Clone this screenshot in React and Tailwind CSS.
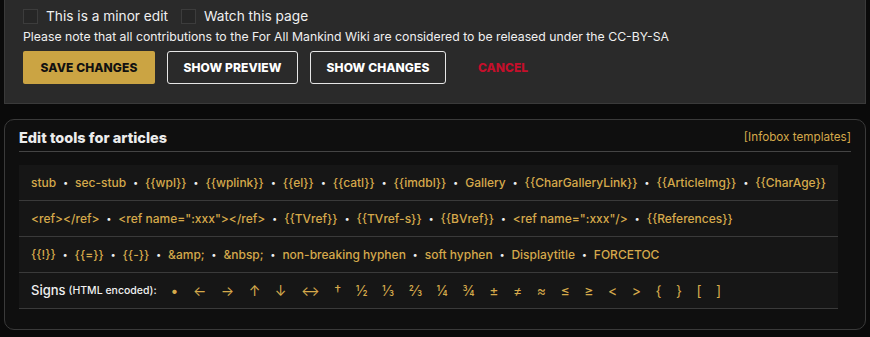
import React from 'react';

const rows = [
  ['stub', 'sec-stub', '{{wpl}}', '{{wplink}}', '{{el}}', '{{catl}}', '{{imdbl}}', 'Gallery', '{{CharGalleryLink}}', '{{ArticleImg}}', '{{CharAge}}'],
  ['<ref></ref>', '<ref name=":xxx"></ref>', '{{TVref}}', '{{TVref-s}}', '{{BVref}}', '<ref name=":xxx"/>', '{{References}}'],
  ['{{!}}', '{{=}}', '{{-}}', '&amp;', '&nbsp;', 'non-breaking hyphen', 'soft hyphen', 'Displaytitle', 'FORCETOC'],
];

const signs = ['•', '←', '→', '↑', '↓', '↔', '†', '½', '⅓', '⅔', '¼', '¾', '±', '≠', '≈', '≤', '≥', '<', '>', '{', '}', '[', ']'];

const Checkbox = ({ label }) => (
  <label className="flex items-center gap-2">
    <span className="w-[15px] h-[15px] border border-[#3c3c3c] bg-[#262626]"></span>
    <span className="text-[13.7px] text-[#f0f0f0]">{label}</span>
  </label>
);

const App = () => {
  return (
    <div className="w-[870px] h-[337px] bg-[#0a0a0a] overflow-hidden font-['Inter',sans-serif]">
      {/* Edit options panel */}
      <div className="mx-[4px] h-[104px] bg-[#2a2a2a] border border-t-0 border-[#3a3a3a] pl-[18px] pt-[8px]">
        <div className="flex items-center gap-[13px] h-[17px]">
          <Checkbox label="This is a minor edit" />
          <Checkbox label="Watch this page" />
        </div>
        <p className="mt-[4px] text-[12.25px] leading-[16px] text-[#f0f0f0]">
          Please note that all contributions to the For All Mankind Wiki are considered to be released under the CC-BY-SA
        </p>
        <div className="mt-[6px] flex items-center gap-[12px]">
          <button className="w-[132px] h-[33px] rounded-[2px] bg-[#cba443] text-[#111] text-[12px] font-extrabold uppercase tracking-[0.1px]">
            Save changes
          </button>
          <button className="w-[131px] h-[33px] rounded-[3px] border border-[#e6e6e6] text-white text-[12px] font-extrabold uppercase tracking-[0.1px]">
            Show preview
          </button>
          <button className="w-[136px] h-[33px] rounded-[3px] border border-[#e6e6e6] text-white text-[12px] font-extrabold uppercase tracking-[0.1px]">
            Show changes
          </button>
          <button className="ml-[20px] h-[33px] text-[#c50f2b] text-[12px] font-extrabold uppercase">
            Cancel
          </button>
        </div>
      </div>

      {/* Edit tools */}
      <div className="mx-[4px] mt-[15px] h-[211px] rounded-[10px] border border-[#3a3a3a] bg-[#0f0f0f] px-[14px] pt-[9px]">
        <div className="flex items-center justify-between border-b border-[#444] pb-[4px]">
          <h3 className="text-[14.5px] font-extrabold text-[#ececec] leading-[18px]">Edit tools for articles</h3>
          <a className="text-[11.7px] text-[#d5a94b]">[Infobox templates]</a>
        </div>
        <div className="mt-[13px] mr-[13px] bg-[#161616]">
          {rows.map((items, i) => (
            <div key={i} className="h-[36px] flex items-center px-[12px] border-b border-[#3a3a3a] text-[12px] font-medium text-[#d5a94b] whitespace-nowrap">
              {items.map((item, j) => (
                <React.Fragment key={j}>
                  {j > 0 && <span className="mx-[7px] text-[9px] text-[#f0f0f0]">•</span>}
                  <a>{item}</a>
                </React.Fragment>
              ))}
            </div>
          ))}
          <div className="h-[36px] flex items-center px-[12px] border-b border-[#3a3a3a] whitespace-nowrap">
            <span className="text-[13px] font-medium text-[#f0f0f0]">Signs</span>
            <span className="ml-[3px] text-[10.5px] font-medium text-[#f0f0f0]">(HTML encoded):</span>
            <div className="ml-[14px] flex items-center gap-[14.5px] text-[14px] text-[#d5a94b]">
              {signs.map((s, k) => (
                <a key={k}>{s}</a>
              ))}
            </div>
          </div>
        </div>
      </div>
    </div>
  );
};

export default App;
